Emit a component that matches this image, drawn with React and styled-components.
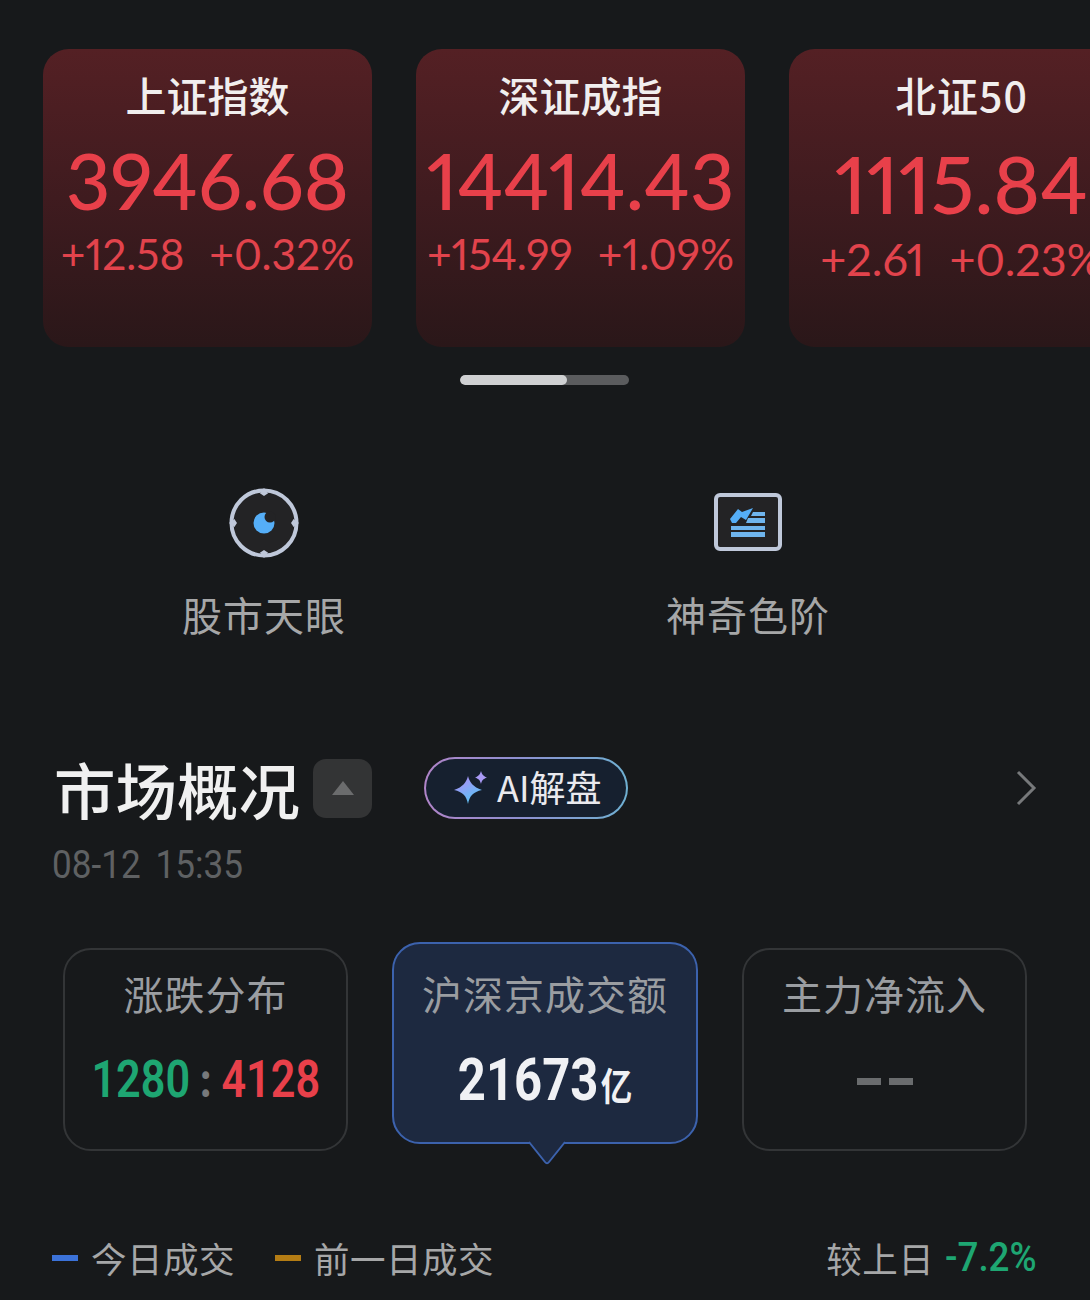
import styled, { createGlobalStyle } from "styled-components";

const CJK = `"Noto Sans CJK SC", "Noto Sans", sans-serif`;
const NUM = `"Lato", "Noto Sans CJK SC", sans-serif`;

const Global = createGlobalStyle`
  html, body { margin: 0; padding: 0; background: #17191b; }
  body { font-family: ${CJK}; }
`;

const Page = styled.div`
  width: 1090px;
  height: 1300px;
  overflow: hidden;
  background: #17191b;
  display: flex;
  flex-direction: column;
`;

const CardStrip = styled.div`
  display: flex;
  gap: 44px;
  padding: 49px 0 0 43px;
  overflow: hidden;
`;

const Card = styled.div`
  flex: 0 0 329px;
  height: 298px;
  box-sizing: border-box;
  padding-top: 20px;
  padding-left: ${(p) => (p.$low ? 16 : 0)}px;
  border-radius: 26px;
  background: linear-gradient(180deg, #542024 0%, #3f1b1f 50%, #2a1719 100%);
  display: flex;
  flex-direction: column;
  align-items: center;
`;

const CardTitle = styled.div`
  font-size: 41px;
  line-height: 50px;
  font-weight: 500;
  color: #f1eeee;
  white-space: nowrap;
  letter-spacing: ${(p) => (p.$low ? 1 : 0)}px;
`;

const Price = styled.div`
  margin-top: ${(p) => (p.$low ? 19 : 16)}px;
  font-family: ${NUM};
  font-size: ${(p) => (p.$low ? 80 : 77)}px;
  line-height: 90px;
  font-weight: 500;
  font-feature-settings: "pnum";
  color: #e8404a;
  white-space: nowrap;
`;

const ChangeRow = styled.div`
  margin-top: ${(p) => (p.$low ? 6 : 4)}px;
  display: flex;
  gap: 25px;
  font-family: ${NUM};
  font-size: ${(p) => (p.$low ? 45 : 42.5)}px;
  line-height: 50px;
  font-feature-settings: "pnum";
  color: #e2434c;
  white-space: nowrap;
`;

const Track = styled.div`
  align-self: flex-start;
  width: 169px;
  height: 10px;
  margin: 28px 0 0 460px;
  border-radius: 5px;
  background: #5b5c5e;
  overflow: hidden;
`;

const Thumb = styled.div`
  width: 107px;
  height: 100%;
  border-radius: 5px;
  background: #cfd0d2;
`;

const Tools = styled.div`
  margin-top: 103px;
  display: flex;
  padding: 0 100px 0 22px;
`;

const Tool = styled.div`
  flex: 0 0 484px;
  display: flex;
  flex-direction: column;
  align-items: center;
`;

const ToolLabel = styled.div`
  margin-top: 28px;
  font-size: 40px;
  line-height: 56px;
  letter-spacing: 1px;
  color: #a6a7a8;
`;

const Header = styled.div`
  margin-top: 115px;
  padding: 0 53px 0 54px;
  height: 62px;
  display: flex;
  align-items: center;
`;

const Heading = styled.h1`
  margin: 2px 0 0;
  font-size: 61.5px;
  line-height: 62px;
  font-weight: 500;
  color: #f0f0f0;
  white-space: nowrap;
`;

const Collapse = styled.div`
  margin-left: 13px;
  width: 59px;
  height: 59px;
  border-radius: 13px;
  background: #333435;
  display: flex;
  align-items: center;
  justify-content: center;
`;

const AiPill = styled.div`
  margin-left: 52px;
  width: 204px;
  height: 62px;
  box-sizing: border-box;
  border: 2px solid transparent;
  border-radius: 31px;
  background:
    linear-gradient(#16202f, #16202f) padding-box,
    linear-gradient(90deg, #b184c8 0%, #8f8fd0 45%, #6fb0d2 100%) border-box;
  display: flex;
  align-items: center;
  padding-left: 28px;
  gap: 9px;
  font-size: 36px;
  line-height: 50px;
  color: #e9e9ee;
`;

const PillText = styled.span`
  padding-bottom: 4px;
`;

const ChevronBox = styled.div`
  margin-left: auto;
  display: flex;
`;

const DateLine = styled.div`
  margin-top: 21px;
  padding-left: 52px;
  font-family: "Roboto", sans-serif;
  font-size: 39px;
  line-height: 50px;
  word-spacing: 7px;
  color: #5f6163;
  transform: scaleX(0.9);
  transform-origin: 52px center;
`;

const TabRow = styled.div`
  margin-top: 52px;
  padding-left: 63px;
  display: flex;
  align-items: flex-start;
  gap: 44px;
`;

const Tab = styled.div`
  position: relative;
  flex: 0 0 ${(p) => (p.$active ? 306 : 285)}px;
  height: ${(p) => (p.$active ? 202 : 203)}px;
  margin-top: ${(p) => (p.$active ? 0 : 6)}px;
  box-sizing: border-box;
  padding-top: ${(p) => (p.$active ? 22 : 16)}px;
  border: 2px solid ${(p) => (p.$active ? "#3c62ad" : "#333537")};
  border-radius: 28px;
  background: ${(p) => (p.$active ? "#1d2940" : "transparent")};
  display: flex;
  flex-direction: column;
  align-items: center;
`;

const TabTitle = styled.div`
  font-size: 40px;
  line-height: 54px;
  letter-spacing: 1px;
  color: #9a9da1;
  white-space: nowrap;
`;

const TabValue = styled.div`
  margin-top: 28px;
  height: 64px;
  display: flex;
  align-items: baseline;
  justify-content: center;
  font-family: "Roboto", ${CJK};
  font-size: 52px;
  line-height: 64px;
  font-weight: 600;
  white-space: nowrap;
  transform: scaleX(0.83);
`;

const Num = styled.span`
  color: ${(p) => p.$color};
`;

const BigNum = styled.span`
  font-size: 59px;
  font-weight: 700;
  color: #f0f1f4;
`;

const Unit = styled.span`
  font-size: 38px;
  font-weight: 700;
  color: #f0f1f4;
  margin-left: 3px;
`;

const Colon = styled.span`
  margin: 0 12px;
  color: #77797c;
  font-size: 46px;
  font-weight: 900;
`;

const Dash = styled.div`
  margin-top: 58px;
  display: flex;
  gap: 8px;
`;

const DashBar = styled.div`
  width: 24px;
  height: 7px;
  background: #6a6c6e;
`;

const Tail = styled.svg`
  position: absolute;
  left: 133px;
  bottom: -24px;
`;

const Legend = styled.div`
  margin-top: 85px;
  padding: 0 53px 0 52px;
  display: flex;
  align-items: center;
  font-size: 35.5px;
  line-height: 44px;
  color: #a6a7a8;
  white-space: nowrap;
`;

const LegendItem = styled.div`
  display: flex;
  align-items: center;
  gap: 13px;
  margin-right: 40px;
  letter-spacing: 0.5px;
`;

const Swatch = styled.span`
  width: 26px;
  height: 6px;
  background: ${(p) => p.$color};
`;

const Compare = styled.div`
  margin-left: auto;
  display: flex;
  align-items: center;
  gap: 3px;
  letter-spacing: 0.5px;
`;

const CompareValue = styled.span`
  font-family: "Roboto", ${CJK};
  font-size: 40px;
  font-weight: 500;
  letter-spacing: 0;
  color: #1ea672;
  display: inline-block;
  transform: scaleX(0.92);
  transform-origin: right center;
`;

const indexes = [
  { name: "上证指数", price: "3946.68", diff: "+12.58", pct: "+0.32%" },
  { name: "深证成指", price: "14414.43", diff: "+154.99", pct: "+1.09%" },
  { name: "北证50", price: "1115.84", diff: "+2.61", pct: "+0.23%", low: true },
];

function EyeIcon() {
  return (
    <svg width="70" height="70" viewBox="0 0 70 70">
      <circle cx="35" cy="35" r="32.5" fill="#232325" stroke="#bfc8da" strokeWidth="4" />
      <path d="M35 0l4 6h-1l-3 2-3-2h-1zM35 70l4-6h-1l-3-2-3 2h-1zM0 35l6-4v1l2 3-2 3v1zM70 35l-6-4v1l-2 3 2 3v1z" fill="#bfc8da" />
      <circle cx="35" cy="35" r="10.5" fill="#55aef7" />
      <circle cx="41" cy="29" r="5.5" fill="#232325" />
    </svg>
  );
}

function LevelIcon() {
  return (
    <svg width="68" height="70" viewBox="0 0 68 70">
      <rect x="2" y="7" width="64" height="54" rx="4" fill="#232325" stroke="#bfc8da" strokeWidth="4" />
      <path d="M16 31L24 21l4 3 11-4-7 12-5-3-5 6h-4z" fill="#55aef7" />
      <path d="M39 24h12v4H37zM34 30h17v5H32zM17 38h34v4H17zM17 44h34v5H17z" fill="#6fb5ee" />
    </svg>
  );
}

function SparkIcon() {
  return (
    <svg width="34" height="34" viewBox="0 0 34 34">
      <defs>
        <linearGradient id="spark" x1="0" y1="0" x2="0.6" y2="1">
          <stop offset="0" stopColor="#bb86f7" />
          <stop offset="1" stopColor="#58c4f5" />
        </linearGradient>
      </defs>
      <path d="M14 5c1.5 6 5 11 14 14-9 2-12.5 6-14 14C12.5 25 9 21 0 19c9-3 12.5-8 14-14z" fill="url(#spark)" />
      <path d="M27 0c.8 3 2 5 6 6.5-4 1.5-5.2 3-6 6.5-.8-3.5-2-5-6-6.5 4-1.5 5.2-3.5 6-6.5z" fill="#a99af5" />
    </svg>
  );
}

export default function App() {
  return (
    <Page>
      <Global />
      <CardStrip>
        {indexes.map((x) => (
          <Card key={x.name} $low={x.low}>
            <CardTitle $low={x.low}>{x.name}</CardTitle>
            <Price $low={x.low}>{x.price}</Price>
            <ChangeRow $low={x.low}>
              <span>{x.diff}</span>
              <span>{x.pct}</span>
            </ChangeRow>
          </Card>
        ))}
      </CardStrip>
      <Track><Thumb /></Track>

      <Tools>
        <Tool>
          <EyeIcon />
          <ToolLabel>股市天眼</ToolLabel>
        </Tool>
        <Tool>
          <LevelIcon />
          <ToolLabel>神奇色阶</ToolLabel>
        </Tool>
      </Tools>

      <Header>
        <Heading>市场概况</Heading>
        <Collapse>
          <svg width="24" height="16" viewBox="0 0 24 16">
            <path d="M12 1l11 14H1z" fill="#6b6c6d" />
          </svg>
        </Collapse>
        <AiPill>
          <SparkIcon />
          <PillText>AI解盘</PillText>
        </AiPill>
        <ChevronBox>
          <svg width="22" height="36" viewBox="0 0 22 36">
            <path d="M3 2l16 16L3 34" fill="none" stroke="#77797b" strokeWidth="3" />
          </svg>
        </ChevronBox>
      </Header>
      <DateLine>08-12 15:35</DateLine>

      <TabRow>
        <Tab>
          <TabTitle>涨跌分布</TabTitle>
          <TabValue>
            <Num $color="#1ea672">1280</Num>
            <Colon>:</Colon>
            <Num $color="#e8404a">4128</Num>
          </TabValue>
        </Tab>
        <Tab $active>
          <TabTitle>沪深京成交额</TabTitle>
          <TabValue>
            <BigNum>21673</BigNum>
            <Unit>亿</Unit>
          </TabValue>
          <Tail width="40" height="26" viewBox="0 0 40 26">
            <path d="M2 2l16 20q2 2.5 4 0L38 2" fill="#1d2940" stroke="#3c62ad" strokeWidth="2" />
          </Tail>
        </Tab>
        <Tab>
          <TabTitle>主力净流入</TabTitle>
          <Dash>
            <DashBar />
            <DashBar />
          </Dash>
        </Tab>
      </TabRow>

      <Legend>
        <LegendItem>
          <Swatch $color="#3b72d9" />
          今日成交
        </LegendItem>
        <LegendItem>
          <Swatch $color="#b47c14" />
          前一日成交
        </LegendItem>
        <Compare>
          较上日
          <CompareValue>-7.2%</CompareValue>
        </Compare>
      </Legend>
    </Page>
  );
}
